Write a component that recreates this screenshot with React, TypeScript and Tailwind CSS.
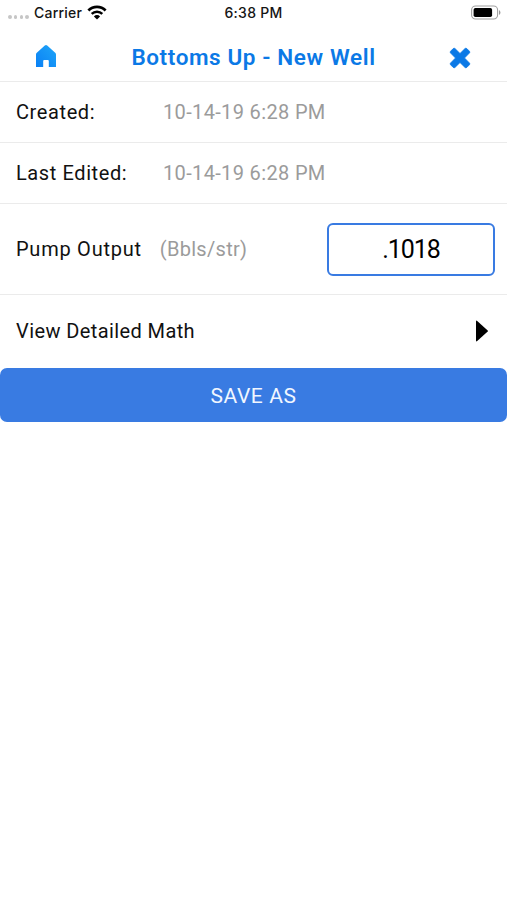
import { useState } from "react";

const details = [
  { label: "Created:", value: "10-14-19 6:28 PM" },
  { label: "Last Edited:", value: "10-14-19 6:28 PM" },
];

function StatusBar() {
  return (
    <div className="relative flex h-[26px] items-center justify-between pl-2 pr-[5px] font-['Inter',sans-serif] text-[14px] font-medium tracking-[0.25px] text-[#151515]">
      <div className="flex items-center">
        <div className="mr-[5px] mt-2 flex gap-[2.2px]">
          <span className="size-[3.6px] rounded-full bg-[#c6c6c6]" />
          <span className="size-[3.6px] rounded-full bg-[#c6c6c6]" />
          <span className="size-[3.6px] rounded-full bg-[#c6c6c6]" />
          <span className="size-[3.6px] rounded-full bg-[#c6c6c6]" />
        </div>
        <span className="-mt-px">Carrier</span>
        <svg className="-mt-px ml-[5px]" width="20" height="15" viewBox="0 0 20 15">
          <path d="M1.4 5.4a12.2 12.2 0 0 1 17.2 0" fill="none" stroke="#000" strokeWidth="2.8" />
          <path d="M4.7 8.9a7.5 7.5 0 0 1 10.6 0" fill="none" stroke="#000" strokeWidth="2.4" />
          <path d="M10 14.6 6.9 11.4a4.4 4.4 0 0 1 6.2 0z" fill="#000" />
        </svg>
      </div>
      <span className="absolute inset-x-0 -mt-px text-center">6:38 PM</span>
      <svg className="-mt-px" width="31" height="15" viewBox="0 0 31 15">
        <rect x="0.6" y="1" width="26" height="13" rx="4" fill="none" stroke="#a0a0a0" strokeWidth="1.1" />
        <rect x="2.6" y="3" width="18.5" height="9" rx="1.8" fill="#000" />
        <path d="M28 5.2c1.9.6 1.9 4 0 4.6z" fill="#999" />
      </svg>
    </div>
  );
}

function Header() {
  return (
    <header className="flex h-14 items-center justify-between border-b border-[#ebebeb] pl-[35px] pr-[36px] pt-2">
      <button className="mb-[3px]" aria-label="Home">
        <svg width="22" height="24" viewBox="0 0 22 24">
          <defs>
            <linearGradient id="home" x1="0" y1="1" x2="1" y2="0">
              <stop offset="0" stopColor="#0a80f5" />
              <stop offset="1" stopColor="#1fa6f8" />
            </linearGradient>
          </defs>
          <path
            d="M1 23V10.5q0-1 .8-1.8L9.8 1.6q1.2-1 2.4 0l8 7.1q.8.8.8 1.8V23h-7.2v-6q0-1-1-1H9.2q-1 0-1 1v6z"
            fill="url(#home)"
          />
        </svg>
      </button>
      <h1 className="pl-px text-[22.5px] font-semibold tracking-[0.6px] text-[#0b79e6]">
        Bottoms Up - New Well
      </h1>
      <button aria-label="Close">
        <svg width="22" height="22" viewBox="0 0 22 22">
          <path
            d="M4.2 1.6 1.6 4.2q-.9.9 0 1.8L6.5 11l-4.9 5q-.9.9 0 1.8l2.6 2.6q.9.9 1.8 0l5-4.9 5 4.9q.9.9 1.8 0l2.6-2.6q.9-.9 0-1.8l-4.9-5 4.9-5q.9-.9 0-1.8l-2.6-2.6q-.9-.9-1.8 0l-5 4.9-5-4.9q-.9-.9-1.8 0z"
            fill="#0b79e6"
            stroke="#0b79e6"
            strokeWidth="0.8"
          />
        </svg>
      </button>
    </header>
  );
}

export default function App() {
  const [output, setOutput] = useState(".1018");

  return (
    <div className="min-h-screen w-full bg-white font-['Roboto',sans-serif] text-[20px] text-[#111]">
      <StatusBar />
      <Header />
      {details.map((item) => (
        <div
          key={item.label}
          className="flex h-[61px] items-center border-b border-[#ebebeb] pl-4"
        >
          <span className="w-[147px] tracking-[0.6px]">{item.label}</span>
          <span className="tracking-[0.35px] text-[#9b9b9b]">{item.value}</span>
        </div>
      ))}
      <div className="flex h-[91px] items-center border-b border-[#ebebeb] pl-4 pr-3">
        <span className="tracking-[0.75px]">Pump Output</span>
        <span className="ml-[18px] tracking-[0.3px] text-[#9b9b9b]">(Bbls/str)</span>
        <input
          className="ml-auto h-[53px] w-[168px] rounded-md border-2 border-[#397be2] text-center text-[25px] tracking-[-1.1px] text-black outline-none"
          value={output}
          onChange={(e) => setOutput(e.target.value)}
        />
      </div>
      <button className="flex h-[73px] w-full items-center justify-between pb-[2px] pl-4 pr-[18px]">
        <span className="tracking-[0.4px]">View Detailed Math</span>
        <svg width="14" height="22" viewBox="0 0 14 22">
          <path d="M1 1.5Q1 0 2.2 1l10.5 9.4q.6.6 0 1.2L2.2 21Q1 22 1 20.5z" fill="#000" />
        </svg>
      </button>
      <button className="flex h-[54px] w-full items-center justify-center rounded-[7px] bg-[#397be2] pt-[3px] text-[21px] tracking-[0.6px] text-[#f0f6ff]">
        SAVE AS
      </button>
    </div>
  );
}
